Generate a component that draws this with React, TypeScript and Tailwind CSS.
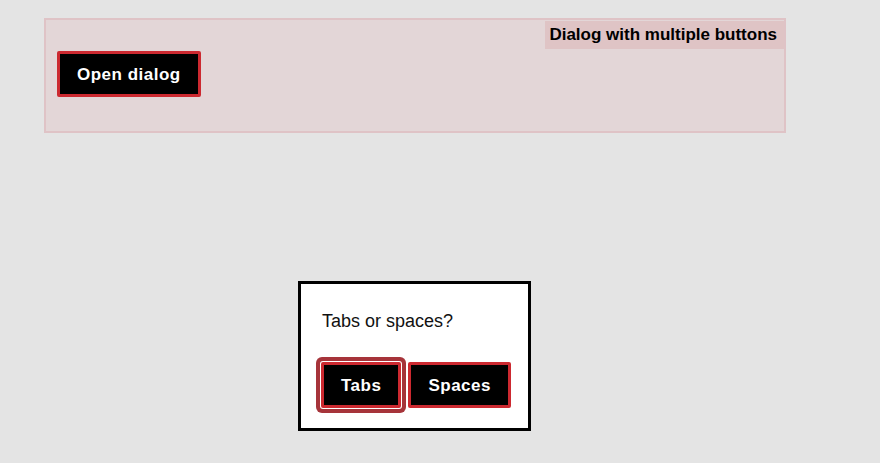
import React from "react";

const btn =
  "h-[46px] px-[17px] flex items-center justify-center bg-black text-white font-bold text-[17px] tracking-[0.5px] border-[3px] border-[#cc2930] rounded-[2px] leading-none";

export default function App() {
  return (
    <div
      className="w-[880px] h-[463px] bg-[#e4e4e4] pt-[18px] pl-[44px] overflow-hidden"
      style={{ fontFamily: '"Liberation Sans", Arial, sans-serif' }}
    >
      <div className="w-[742px] h-[115px] border-2 border-[#dfc3c6] bg-[#e3d6d7] flex flex-col">
        <div className="self-end h-[28px] mt-[1px] flex items-center pl-[4px] pr-[7px] bg-[#dfc4c5] text-[17px] font-bold text-black">
          Dialog with multiple buttons
        </div>
        <div className="ml-[11px] mt-[2px] flex">
          <button className={btn}>Open dialog</button>
        </div>
      </div>
      <div className="ml-[254px] mt-[148px] w-[233px] h-[150px] border-[3px] border-black bg-white pl-[21px] pt-[27px]">
        <p className="text-[18px] leading-[21px] text-[#111]">Tabs or spaces?</p>
        <div className="mt-[30px] -ml-[1px] flex gap-[7px]">
          <button className={btn + " shadow-[0_0_0_1px_#ffffff,0_0_0_5px_#a6343a]"}>Tabs</button>
          <button className={btn}>Spaces</button>
        </div>
      </div>
    </div>
  );
}
